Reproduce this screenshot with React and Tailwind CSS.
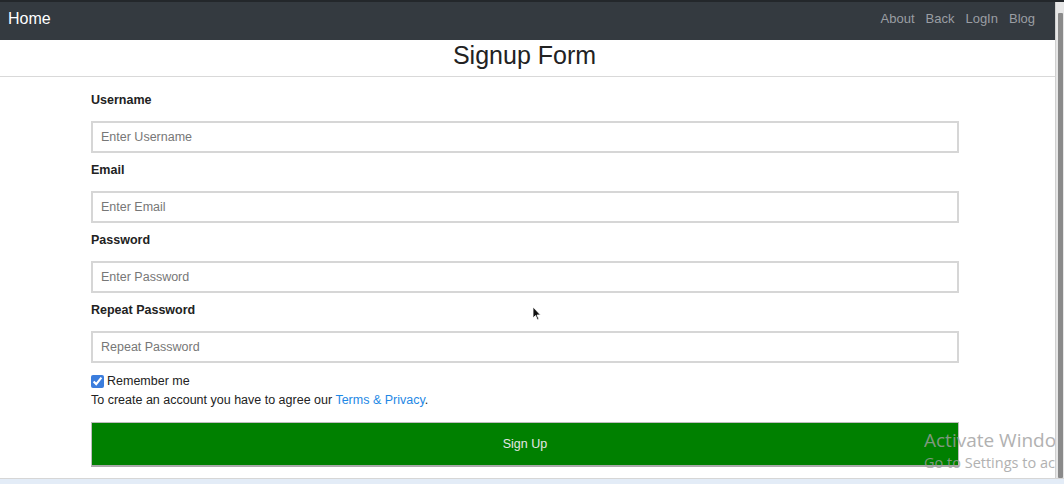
import React from "react";

function Field({ label, placeholder, type = "text" }) {
  return (
    <div className="flex flex-col">
      <label className="text-[12.5px] leading-[16px] font-bold text-[#222] mb-[13px]">{label}</label>
      <input
        type={type}
        placeholder={placeholder}
        className="h-[32px] w-full border-2 border-[#d6d6d6] bg-white px-[8px] text-[12.5px] text-[#333] placeholder:text-[#777] outline-none"
        style={{ fontFamily: '"Liberation Sans", Arial, sans-serif' }}
      />
    </div>
  );
}

export default function App() {
  return (
    <div
      className="relative w-[1064px] h-[484px] overflow-hidden bg-white flex flex-col"
      style={{ fontFamily: '"Liberation Sans", Arial, sans-serif' }}
    >
      <div className="h-[2px] bg-[#23272b] shrink-0" />
      <div className="flex flex-1 min-h-0">
        <div className="flex-1 flex flex-col min-w-0">
          <nav className="h-[38px] bg-[#343a40] flex items-center justify-between px-[8px] pb-[5px] shrink-0">
            <span className="text-[16px] text-white">Home</span>
            <div className="flex items-center gap-[11px] text-[13px] text-[#9a9ea3] pr-[12px]">
              <span>About</span>
              <span>Back</span>
              <span>LogIn</span>
              <span>Blog</span>
            </div>
          </nav>
          <div className="h-[37px] border-b border-[#d9d9d9] flex items-center justify-center pb-[6px] shrink-0">
            <h1 className="text-[25px] leading-[30px] text-[#222] pr-[6px]">Signup Form</h1>
          </div>
          <form className="w-[868px] ml-[91px] pt-[15px] flex flex-col gap-[9px]" onSubmit={(e) => e.preventDefault()}>
            <Field label="Username" placeholder="Enter Username" />
            <Field label="Email" placeholder="Enter Email" />
            <Field label="Password" placeholder="Enter Password" type="password" />
            <Field label="Repeat Password" placeholder="Repeat Password" type="password" />
            <div className="mt-[1px] flex flex-col">
              <label className="flex items-center gap-[3px] text-[12.5px] leading-[16px] text-[#222]">
                <input type="checkbox" defaultChecked className="w-[13px] h-[13px] m-0 accent-[#3b7ddd]" />
                <span>Remember me</span>
              </label>
              <p className="mt-[3px] text-[12.5px] leading-[16px] text-[#222]">
                To create an account you have to agree our{" "}
                <a href="#" className="text-[#1e88e5]">Terms &amp; Privacy</a>.
              </p>
              <button
                type="submit"
                className="mt-[14px] h-[45px] w-full bg-[#008000] border border-[#bdbdbd] border-b-2 border-b-[#a9a9a9] text-[12.5px] text-[#e6e6e6]"
              >
                Sign Up
              </button>
            </div>
          </form>
        </div>
        <div className="relative z-10 w-[9px] bg-[#e6e6e6] border-l border-[#d0d0d0] shrink-0 flex flex-col pt-[11px] items-center">
          <div className="w-[5px] flex-1 bg-[#8a8a8a] rounded-[1px]" />
        </div>
      </div>
      <div className="h-[6px] shrink-0 border-t border-[#d6d6d6] bg-[#e3ecf7]" />

      <div className="absolute left-[924px] top-[429px] pointer-events-none text-[#9e9e9e] opacity-80 whitespace-nowrap" style={{ fontFamily: '"Open Sans", "Liberation Sans", sans-serif' }}>
        <div className="text-[19px] leading-[22px]">Activate Windows</div>
        <div className="text-[14.5px] leading-[18px] mt-[3px]">Go to Settings to activate Windows.</div>
      </div>

      <svg className="absolute left-[532px] top-[306px] pointer-events-none" width="10" height="15" viewBox="0 0 10 15">
        <path d="M1 1 L1 12 L3.5 9.5 L5.5 14 L7 13.3 L5 9 L8.5 9 Z" fill="#111" stroke="#fff" strokeWidth="0.8" />
      </svg>
    </div>
  );
}
